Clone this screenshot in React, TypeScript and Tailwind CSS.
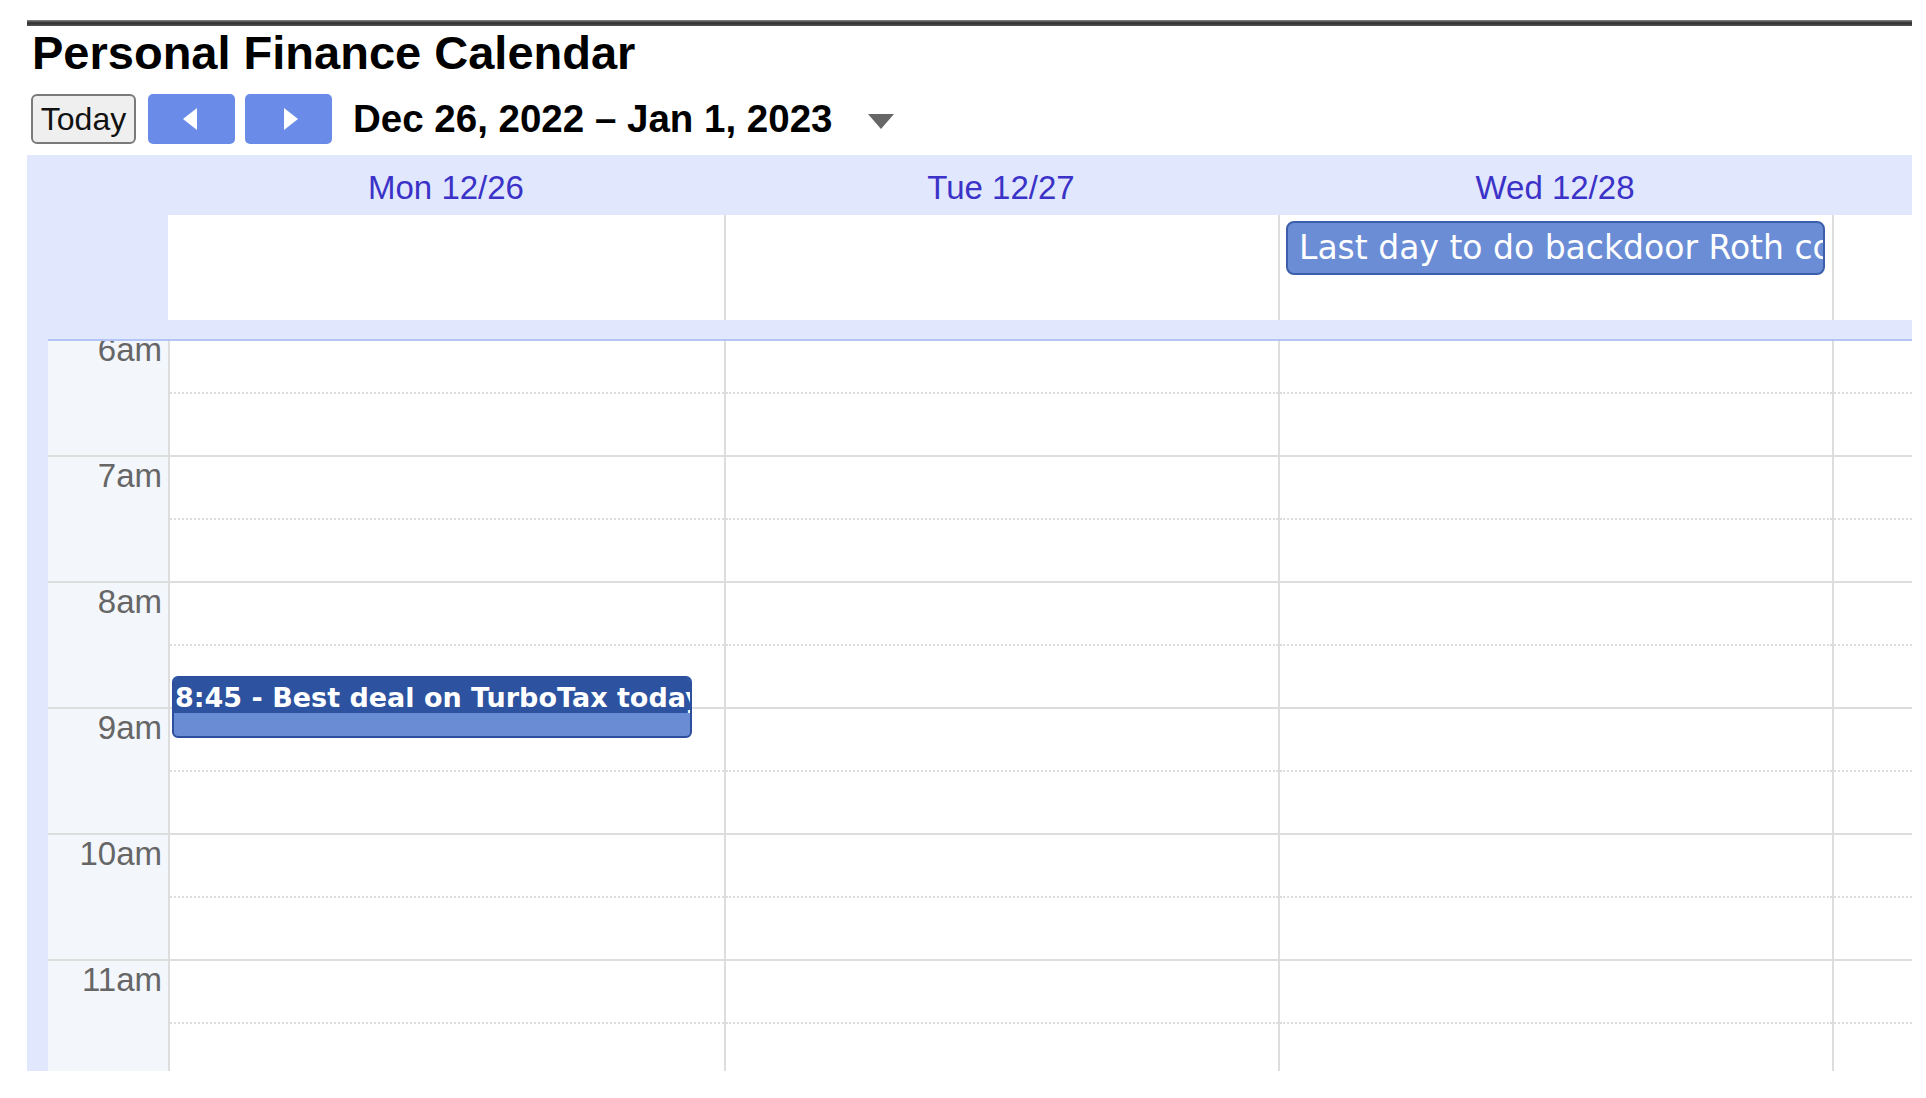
const hours = ["6am", "7am", "8am", "9am", "10am", "11am"];

const Arrow = ({ dir }: { dir: "left" | "right" }) => (
  <svg width="16" height="22" viewBox="0 0 16 22">
    {dir === "left" ? (
      <polygon points="15,0 15,22 1,11" fill="#ffffff" />
    ) : (
      <polygon points="1,0 1,22 15,11" fill="#ffffff" />
    )}
  </svg>
);

const HourRow = ({ label }: { label: string }) => (
  <div className="flex h-[126px] shrink-0 border-t-2 border-[#dddddd]">
    <div className="w-[122px] shrink-0 border-r-2 border-[#dddddd] bg-[#f3f7fc] pr-[6px] text-right text-[33px] leading-[38px] text-[#666666]">
      {label}
    </div>
    <div className="w-[554px] shrink-0">
      <div className="mt-[61px] border-t-2 border-dotted border-[#dddddd]" />
    </div>
    <div className="w-[554px] shrink-0 border-l-2 border-[#dddddd]">
      <div className="mt-[61px] border-t-2 border-dotted border-[#dddddd]" />
    </div>
    <div className="w-[554px] shrink-0 border-l-2 border-[#dddddd]">
      <div className="mt-[61px] border-t-2 border-dotted border-[#dddddd]" />
    </div>
    <div className="flex-1 border-l-2 border-[#dddddd]">
      <div className="mt-[61px] border-t-2 border-dotted border-[#dddddd]" />
    </div>
  </div>
);

export default function App() {
  return (
    <div className="h-[1098px] w-[1926px] overflow-hidden bg-white font-['Liberation_Sans',Arial,sans-serif] text-black">
      <div className="ml-[27px] w-[1885px] pt-[20px]">
        <div className="h-[6px] bg-gradient-to-b from-[#8a8a8a] via-[#2e2e2e] to-[#555555]" />

        <h1 className="mt-[3px] pl-[5px] text-[47px] font-bold leading-[47px]">Personal Finance Calendar</h1>

        <div className="mt-[18px] flex h-[50px] items-center">
          <button className="ml-[4px] h-[50px] w-[105px] rounded-[6px] border-2 border-[#7a7a7a] bg-[#efefef] text-[32px] leading-none text-[#111111]">
            Today
          </button>
          <button className="ml-[12px] flex h-[50px] w-[87px] items-center justify-center rounded-[5px] bg-[#6a8ce8] pr-[4px]">
            <Arrow dir="left" />
          </button>
          <button className="ml-[10px] flex h-[50px] w-[87px] items-center justify-center rounded-[5px] bg-[#6a8ce8] pl-[4px]">
            <Arrow dir="right" />
          </button>
          <div className="ml-[21px] text-[38.5px] font-bold">Dec 26, 2022 – Jan 1, 2023</div>
          <svg className="ml-[36px] mt-[4px]" width="26" height="15" viewBox="0 0 26 15">
            <polygon points="0,0 26,0 13,15" fill="#666666" />
          </svg>
        </div>

        <div className="mt-[11px] flex flex-col bg-[#e1e7fd]">
          {/* day headers */}
          <div className="flex h-[60px] pt-[5px] text-[33px] text-[#3b32c8]">
            <div className="w-[141px] shrink-0" />
            <div className="flex w-[556px] shrink-0 items-center justify-center">Mon 12/26</div>
            <div className="flex w-[554px] shrink-0 items-center justify-center">Tue 12/27</div>
            <div className="flex w-[554px] shrink-0 items-center justify-center">Wed 12/28</div>
            <div className="flex-1" />
          </div>

          {/* all-day row */}
          <div className="flex h-[105px]">
            <div className="w-[141px] shrink-0" />
            <div className="flex flex-1 bg-white">
              <div className="w-[556px] shrink-0" />
              <div className="w-[554px] shrink-0 border-l-2 border-[#dddddd]" />
              <div className="w-[554px] shrink-0 border-l-2 border-[#dddddd] pl-[6px] pt-[6px]">
                <div className="h-[54px] w-[539px] overflow-hidden whitespace-nowrap rounded-[8px] border-2 border-[#3d5fab] bg-[#6a8dd6] pl-[11px] font-['DejaVu_Sans',Verdana,sans-serif] text-[33px] leading-[50px] text-white">
                  Last day to do backdoor Roth conversion
                </div>
              </div>
              <div className="flex-1 border-l-2 border-[#dddddd]" />
            </div>
          </div>

          <div className="h-[19px]" />

          {/* time grid */}
          <div className="flex h-[732px]">
            <div className="w-[21px] shrink-0" />
            <div className="relative flex-1 overflow-hidden border-t-2 border-[#b3c5f6] bg-white">
              <div className="-mt-[12px] flex flex-col">
                {hours.map((h) => (
                  <HourRow key={h} label={h} />
                ))}
              </div>

              <div className="absolute left-[124px] top-[335px] h-[62px] w-[520px] overflow-hidden rounded-[6px] border-2 border-[#2c4f9e] bg-[#6a8cd5] font-['DejaVu_Sans',Verdana,sans-serif] text-white">
                <div className="h-[35px] overflow-hidden whitespace-nowrap bg-[#2c52a0] pl-[1px] text-[27px] font-bold leading-[39px]">
                  8:45 - Best deal on TurboTax today
                </div>
              </div>
            </div>
          </div>
        </div>
      </div>
    </div>
  );
}
